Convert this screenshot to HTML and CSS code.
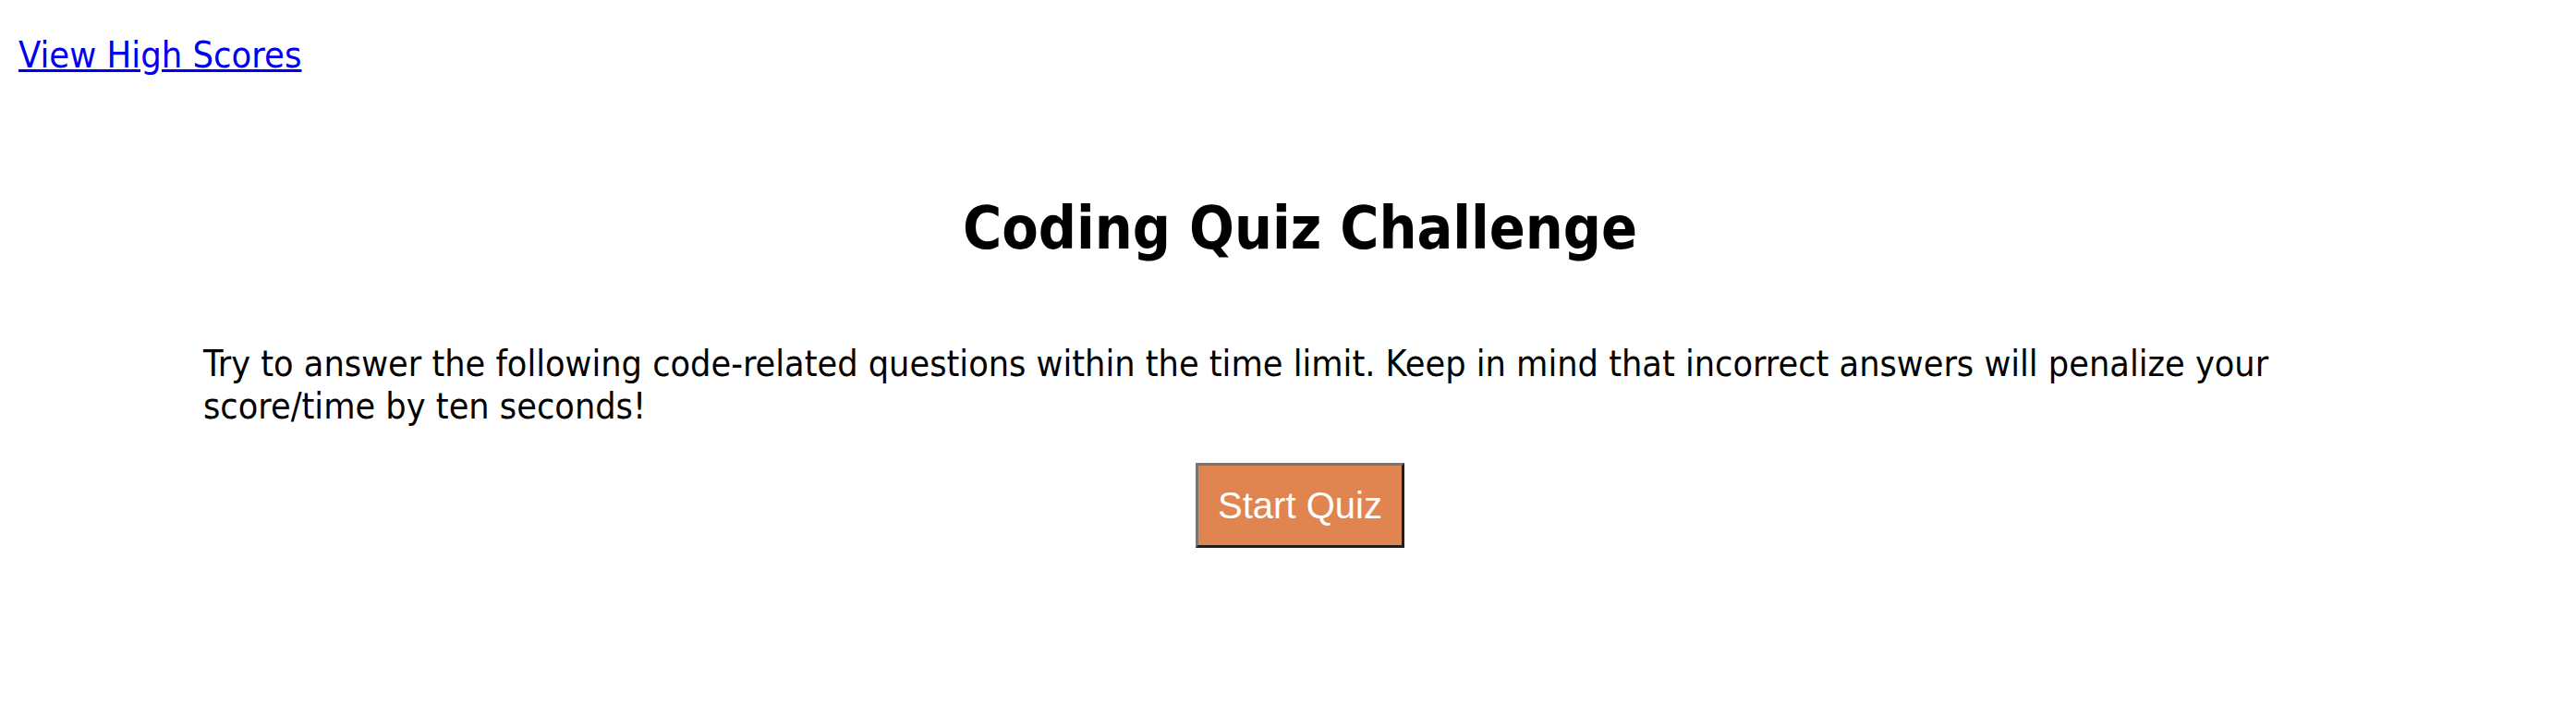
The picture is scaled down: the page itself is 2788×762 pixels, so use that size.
FILE: index.html
```html
<!DOCTYPE html>
<html lang="en">
<head>
<meta charset="utf-8">
<title>Coding Quiz Challenge</title>
<link rel="stylesheet" href="styles.css">
</head>
<body>
<header class="top">
  <a class="scores-link" href="#">View High Scores</a>
</header>
<main class="quiz">
  <h1 class="title">Coding Quiz Challenge</h1>
  <p class="intro">Try to answer the following code-related questions within the time limit. Keep in mind that incorrect answers will penalize your score/time by ten seconds!</p>
  <div class="actions">
    <button class="start-btn" type="button">Start Quiz</button>
  </div>
</main>
</body>
</html>
```
FILE: styles.css
```css
html, body {
  margin: 0;
  padding: 0;
  background: #ffffff;
}
body {
  font-family: "DejaVu Sans Condensed", "DejaVu Sans", sans-serif;
  color: #000000;
}
.top {
  padding: 36px 0 0 20px;
  font-size: 39.5px;
  line-height: 46px;
}
.scores-link {
  color: #0000ee;
  text-decoration: underline;
}
.quiz {
  margin: 125px 0 0 220px;
  width: 2374px;
}
.title {
  margin: 0;
  text-align: center;
  font-size: 64px;
  line-height: 80px;
  font-weight: bold;
}
.intro {
  margin: 84px 0 0 0;
  font-size: 39.2px;
  line-height: 46px;
}
.actions {
  margin-top: 38px;
  display: flex;
  justify-content: center;
}
.start-btn {
  font-family: "Liberation Sans", Arial, sans-serif;
  font-size: 40px;
  line-height: 46px;
  color: #ffffff;
  background: #e08550;
  padding: 20px 21px;
  border-style: solid;
  border-width: 3px;
  border-color: #767676 #1e1e1e #1e1e1e #767676;
  border-radius: 0;
  margin: 0;
}
```
